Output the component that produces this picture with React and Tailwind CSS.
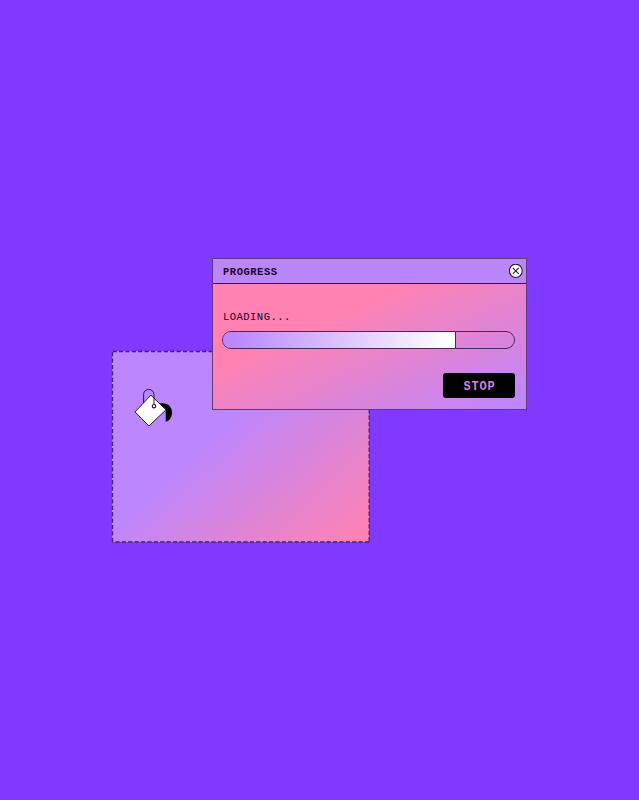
function PaintBucket() {
  return (
    <svg className="absolute left-[22px] top-[36px]" width="40" height="42" viewBox="134 387 40 42" fill="none">
      <path d="M159.500 403.500C167 402 172 406 172 412.500C172 417 170 420.500 165.700 421.700V409Z" fill="#000" />
      <path d="M150.900 395.200L166 409.800L148.900 426L135 411.900Z" fill="#fff" stroke="#251a33" strokeWidth="1" />
      <path d="M143.600 403V394.500C143.600 387.800 154 387.800 154 394.500V404.500" stroke="#251a33" strokeWidth="1" />
      <circle cx="154" cy="406.200" r="1.700" fill="#fff" stroke="#251a33" strokeWidth="1.200" />
    </svg>
  );
}

function Canvas() {
  return (
    <div className="absolute left-[112px] top-[351px] h-[191px] w-[257px] bg-[linear-gradient(138deg,#bb86ff_40%,#ff82b2_98%)]">
      <svg className="absolute inset-0 overflow-visible" width="257" height="191" fill="none">
        <path d="M0.500 0.500H257.200M257.200 0.500V191M257.200 191H0.500M0.500 191V0.500" stroke="#3f2860" strokeWidth="1.300" strokeDasharray="4.300 2.100" />
      </svg>
      <PaintBucket />
    </div>
  );
}

function ProgressWindow() {
  return (
    <section className="absolute left-[212px] top-[258px] flex h-[152px] w-[315px] flex-col border border-[#5f3a7c]">
      <header className="flex h-[25px] shrink-0 items-center justify-between border-b border-[#32154b] bg-[#bb86fc] pl-[10px] pr-[3px]">
        <h1 className="mt-[3px] text-[10.500px] leading-none font-bold tracking-[0.520px]">PROGRESS</h1>
        <button aria-label="Close" className="h-[15px] w-[14px]">
          <svg width="14" height="15" viewBox="0 0 14 15" fill="none" stroke="#251a33">
            <ellipse cx="6.800" cy="6.800" rx="6.400" ry="6.700" fill="#fff" strokeWidth="1.100" />
            <path d="M3.800 3.800L9.800 9.800M9.800 3.800L3.800 9.800" strokeWidth="1.100" />
          </svg>
        </button>
      </header>
      <div className="flex flex-1 flex-col bg-[linear-gradient(156deg,#ff82b2_32%,#bb86ff_100%)] pl-[9px] pr-[11px] pt-[28px]">
        <p className="ml-px text-[10.500px] leading-[11px] tracking-[0.470px]">LOADING...</p>
        <div className="mt-[8px] h-[18px] w-[293px] shrink-0 overflow-hidden rounded-full border border-[#4b2955]">
          <div className="h-full w-[233px] border-r border-[#4b2955] bg-[linear-gradient(to_right,#bb86ff_4%,#ffffff_98%)]" />
        </div>
        <button className="mt-[24px] flex h-[25px] w-[72px] items-center justify-center self-end rounded-[3px] bg-black pl-px pt-[2px] text-[12px] leading-none font-bold tracking-[0.850px] text-[#cc84e5]">
          STOP
        </button>
      </div>
    </section>
  );
}

export default function App() {
  return (
    <main className="relative h-[800px] w-full overflow-hidden bg-[#7f39ff] font-['Liberation_Mono',monospace] text-[#16051f]">
      <Canvas />
      <ProgressWindow />
    </main>
  );
}
